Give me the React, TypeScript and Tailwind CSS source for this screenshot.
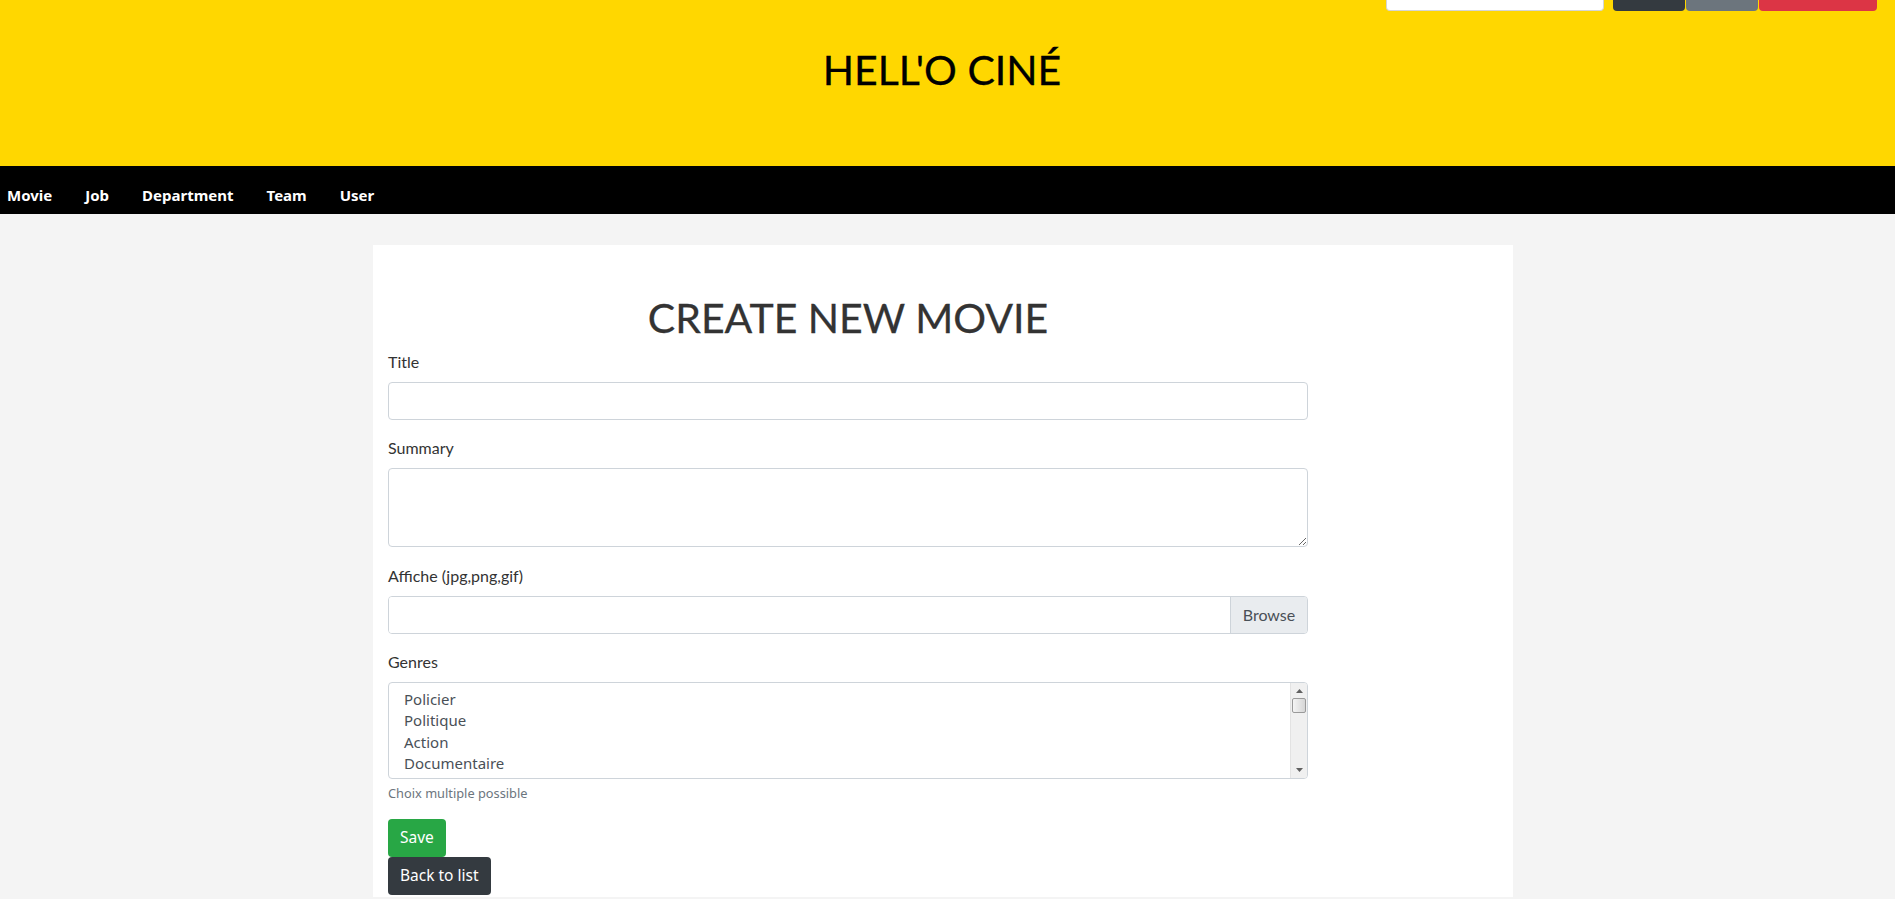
import React from 'react';

const navLinks = ['Movie', 'Job', 'Department', 'Team', 'User'];
const genres = ['Policier', 'Politique', 'Action', 'Documentaire', 'Thriller'];

const Label = ({ children }: { children: React.ReactNode }) => (
  <label className="block mb-2 text-[16px] leading-6 text-[#333]">{children}</label>
);

export default function App() {
  return (
    <div className="min-h-screen bg-[#f4f4f4] font-['Lato',sans-serif]">
      {/* Header */}
      <header className="relative h-[166px] bg-[#ffd700] flex justify-center pr-[11px]">
        <div className="absolute top-0 right-[18px] flex items-start">
          <div className="w-[218px] h-[11px] bg-white border border-t-0 border-[#d5d5d5] rounded-b-[4px] mr-[9px]" />
          <div className="w-[72px] h-[11px] bg-[#343a40] rounded-b-[4px]" />
          <div className="w-[72px] h-[11px] bg-[#6c757d] rounded-b-[4px] ml-[1px]" />
          <div className="w-[118px] h-[11px] bg-[#dc3545] rounded-b-[4px] ml-[1px]" />
        </div>
        <h1 className="mt-[46px] text-[41px] leading-[48px] text-black font-normal [-webkit-text-stroke:0.3px_black]">
          HELL'O CINÉ
        </h1>
      </header>

      {/* Navigation */}
      <nav className="h-[48px] bg-black flex items-center pl-[7px] gap-[33px] font-['Noto_Sans',sans-serif]">
        {navLinks.map((link) => (
          <a key={link} href="#" className="text-white font-bold text-[15px] leading-6 pt-[10px]">
            {link}
          </a>
        ))}
      </nav>

      {/* Contenu */}
      <main className="flex justify-center pr-[9px] pt-[31px]">
        <div className="w-[1140px] bg-white px-[15px] pt-[49px] pb-[2px]">
          <div className="w-[920px]">
            <h2 className="text-center text-[41px] leading-[48px] text-[#333] mb-2 [-webkit-text-stroke:0.3px_#333]">
              CREATE NEW MOVIE
            </h2>

            <div className="mb-4">
              <Label>Title</Label>
              <input className="block w-full h-[38px] border border-[#ced4da] rounded-[4px] px-3 outline-none" />
            </div>

            <div className="mb-4">
              <Label>Summary</Label>
              <textarea className="block w-full h-[79px] border border-[#ced4da] rounded-[4px] px-3 py-1.5 outline-none" />
            </div>

            <div className="mb-4 pt-[1px]">
              <Label>Affiche (jpg,png,gif)</Label>
              <div className="flex h-[38px] border border-[#ced4da] rounded-[4px] overflow-hidden">
                <div className="flex-1 bg-white" />
                <div className="w-[77px] bg-[#e9ecef] border-l border-[#ced4da] flex items-center justify-center text-[16px] text-[#495057]">
                  Browse
                </div>
              </div>
            </div>

            <div className="mb-4">
              <Label>Genres</Label>
              <div className="flex h-[97px] border border-[#ced4da] rounded-[4px] overflow-hidden">
                <div className="flex-1 pl-[12px] pt-[6px] overflow-hidden">
                  {genres.map((g) => (
                    <div key={g} className="text-[15px] leading-[21.3px] text-[#495057] px-[3px] font-['Noto_Sans',sans-serif]">
                      {g}
                    </div>
                  ))}
                </div>
                {/* Fausse barre de défilement */}
                <div className="w-[17px] bg-[#f0f0f0] border-l border-[#e3e3e3] flex flex-col items-center">
                  <svg width="7" height="4" viewBox="0 0 7 4" className="mt-[6px]">
                    <path d="M0 4 L3.5 0 L7 4 Z" fill="#606060" />
                  </svg>
                  <div className="mt-[5px] w-[14px] h-[15px] border border-[#9a9a9a] rounded-[2px] bg-gradient-to-r from-[#f4f4f4] to-[#d6d6d6]" />
                  <div className="flex-1" />
                  <svg width="7" height="4" viewBox="0 0 7 4" className="mb-[6px]">
                    <path d="M0 0 L3.5 4 L7 0 Z" fill="#606060" />
                  </svg>
                </div>
              </div>
              <small className="block mt-[5px] text-[12.8px] leading-[19px] text-[#6c757d] font-['Noto_Sans',sans-serif]">
                Choix multiple possible
              </small>
            </div>

            <div className="flex flex-col items-start font-['Noto_Sans',sans-serif]">
              <button className="h-[38px] px-[12px] bg-[#28a745] text-white text-[15.5px] rounded-[4px]">Save</button>
              <button className="h-[38px] px-[12px] bg-[#343a40] text-white text-[15.5px] rounded-[4px]">Back to list</button>
            </div>
          </div>
        </div>
      </main>
    </div>
  );
}
